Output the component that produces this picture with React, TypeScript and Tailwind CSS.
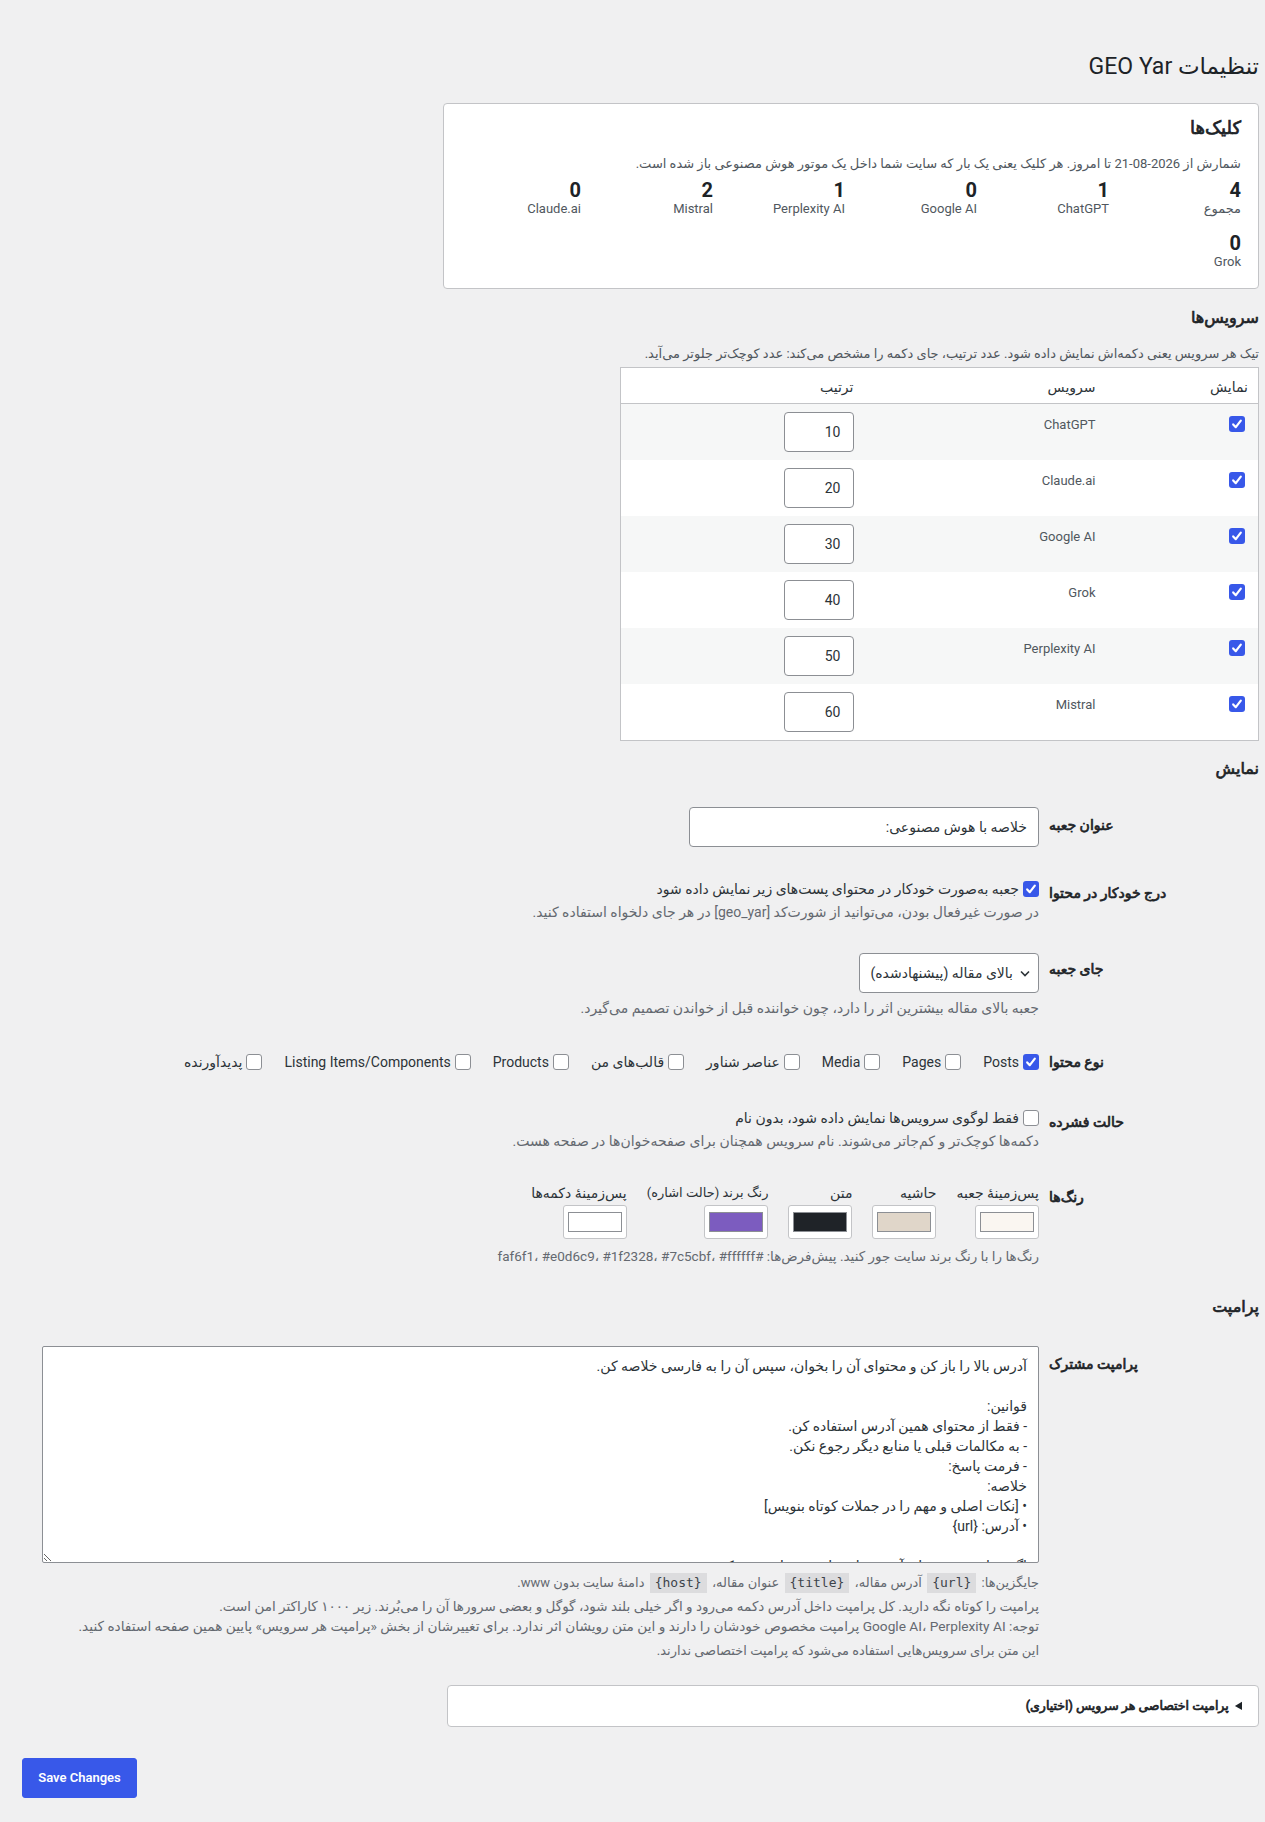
import React from "react";

type Stat = { label: string; value: number };
type Service = { name: string; order: number };

const clickStats: Stat[] = [
  { label: "مجموع", value: 4 },
  { label: "ChatGPT", value: 1 },
  { label: "Google AI", value: 0 },
  { label: "Perplexity AI", value: 1 },
  { label: "Mistral", value: 2 },
  { label: "Claude.ai", value: 0 },
  { label: "Grok", value: 0 },
];

const services: Service[] = [
  { name: "ChatGPT", order: 10 },
  { name: "Claude.ai", order: 20 },
  { name: "Google AI", order: 30 },
  { name: "Grok", order: 40 },
  { name: "Perplexity AI", order: 50 },
  { name: "Mistral", order: 60 },
];

const postTypes = [
  { label: "Posts", checked: true },
  { label: "Pages", checked: false },
  { label: "Media", checked: false },
  { label: "عناصر شناور", checked: false },
  { label: "قالب‌های من", checked: false },
  { label: "Products", checked: false },
  { label: "Listing Items/Components", checked: false },
  { label: "پدیدآورنده", checked: false },
];

// swatch classes are spelled out so the stylesheet picks them up
const colors = [
  { label: "پس‌زمینهٔ جعبه", swatch: "bg-[#faf6f1]", size: "text-[14px]" },
  { label: "حاشیه", swatch: "bg-[#e0d6c9]", size: "text-[14px]" },
  { label: "متن", swatch: "bg-[#1f2328]", size: "text-[14px]" },
  { label: "رنگ برند (حالت اشاره)", swatch: "bg-[#7c5cbf]", size: "text-[13px]" },
  { label: "پس‌زمینهٔ دکمه‌ها", swatch: "bg-[#ffffff]", size: "text-[14px]" },
];

const defaultPrompt = [
  "آدرس بالا را باز کن و محتوای آن را بخوان، سپس آن را به فارسی خلاصه کن.",
  "",
  "قوانین:",
  "- فقط از محتوای همین آدرس استفاده کن.",
  "- به مکالمات قبلی یا منابع دیگر رجوع نکن.",
  "- فرمت پاسخ:",
  "خلاصه:",
  "• [نکات اصلی و مهم را در جملات کوتاه بنویس]",
  "• آدرس: {url}",
  "",
  "اگر نتوانستی محتوای آدرس را بخوانی، فقط بنویس که صفحه در دسترس نیست.",
].join("\n");

// Persian headings use a thickened regular face (the bold face runs too wide)
const heavy = "font-normal [-webkit-text-stroke:0.7px_currentColor]";

const Checkbox = ({ checked = false }: { checked?: boolean }) =>
  checked ? (
    <span className="flex h-4 w-4 shrink-0 items-center justify-center rounded-[3px] bg-[#3858e9]">
      <svg viewBox="0 0 16 16" className="h-4 w-4" fill="none">
        <path
          d="M4.2 8.4 L6.8 11.2 L11.8 4.6"
          stroke="white"
          strokeWidth="2.2"
          strokeLinecap="round"
          strokeLinejoin="round"
        />
      </svg>
    </span>
  ) : (
    <span className="block h-4 w-4 shrink-0 rounded-[3px] border border-[#8c8f94] bg-white" />
  );

const Code = ({ children }: { children: React.ReactNode }) => (
  <code className="mx-[2px] inline-block bg-[#dcdcde] px-[5px] font-['DejaVu_Sans_Mono',monospace] text-[13px] leading-5 text-[#3c434a]">
    {children}
  </code>
);

const FormRow = ({
  label,
  labelClass,
  bodyClass,
  children,
}: {
  label: string;
  labelClass: string;
  bodyClass: string;
  children: React.ReactNode;
}) => (
  <div className="flex">
    <div className={`w-[210px] shrink-0 text-left text-[14px] leading-5 text-[#1d2327] ${heavy} ${labelClass}`}>
      {label}
    </div>
    <div className={`min-w-0 flex-1 px-[10px] ${bodyClass}`}>{children}</div>
  </div>
);

const SectionTitle = ({ title, className }: { title: string; className: string }) => (
  <h2 className={`text-[16px] leading-[22px] text-[#1d2327] ${heavy} ${className}`}>{title}</h2>
);

export default function App() {
  return (
    <div
      dir="rtl"
      className="min-h-[1822px] bg-[#f0f0f1] pb-6 pl-[22px] pr-[6px] font-['Roboto','DejaVu_Sans',sans-serif] text-[13px] leading-5 text-[#3c434a]"
    >
      <h1 className="pt-[52px] text-[23px] font-normal leading-[30px] text-[#1d2327]">تنظیمات GEO Yar</h1>

      {/* click counters */}
      <div className="mt-[21px] w-[816px] rounded-[4px] border border-[#c3c4c7] bg-white px-[17px] pb-[18px] pt-[13px]">
        <h2 className={`text-[18px] leading-[22px] text-[#1d2327] ${heavy}`}>کلیک‌ها</h2>
        <p className="mt-[15px] text-[#50575e]">
          شمارش از 2026-08-21 تا امروز. هر کلیک یعنی یک بار که سایت شما داخل یک موتور هوش مصنوعی باز شده است.
        </p>
        <div className="mt-[5px] grid grid-cols-6 gap-x-3 gap-y-[15px]">
          {clickStats.map((s) => (
            <div key={s.label}>
              <div className="text-[20px] font-bold leading-[22px] text-[#1d2327]">{s.value}</div>
              <div className="text-[13px] leading-4 text-[#50575e]">{s.label}</div>
            </div>
          ))}
        </div>
      </div>

      {/* services table */}
      <SectionTitle title="سرویس‌ها" className="mt-[18px]" />
      <p className="mt-[15px] text-[#50575e]">
        تیک هر سرویس یعنی دکمه‌اش نمایش داده شود. عدد ترتیب، جای دکمه را مشخص می‌کند: عدد کوچک‌تر جلوتر می‌آید.
      </p>
      <table className="mt-[3px] w-[639px] border-collapse border border-[#c3c4c7] bg-white">
        <thead>
          <tr className="border-b border-[#c3c4c7]">
            <th className="w-[152px] pb-[6px] pr-[10px] pt-[9px] text-right text-[14px] font-normal text-[#2c3338]">
              نمایش
            </th>
            <th className="w-[243px] pb-[6px] pr-[11px] pt-[9px] text-right text-[14px] font-normal text-[#2c3338]">
              سرویس
            </th>
            <th className="pb-[6px] pr-[10px] pt-[9px] text-right text-[14px] font-normal text-[#2c3338]">ترتیب</th>
          </tr>
        </thead>
        <tbody>
          {services.map((s, i) => (
            <tr key={s.name} className={i % 2 === 0 ? "bg-[#f6f7f7]" : "bg-white"}>
              <td className="pr-[13px] pt-[12px] align-top">
                <Checkbox checked />
              </td>
              <td className="pr-[11px] pt-[11px] align-top text-[13px] text-[#50575e]">{s.name}</td>
              <td className="py-[8px] pr-[10px] align-top">
                <input
                  type="text"
                  inputMode="numeric"
                  defaultValue={s.order}
                  className="block h-[40px] w-[70px] rounded-[4px] border border-[#8c8f94] bg-white pr-[12px] text-right text-[14px] text-[#2c3338]"
                />
              </td>
            </tr>
          ))}
        </tbody>
      </table>

      {/* display options */}
      <SectionTitle title="نمایش" className="mt-[17px]" />
      <div className="mt-[12px]">
        <FormRow label="عنوان جعبه" labelClass="pt-[23px]" bodyClass="pb-[15px] pt-[15px]">
          <input
            type="text"
            defaultValue="خلاصه با هوش مصنوعی:"
            className="block h-[40px] w-[350px] rounded-[4px] border border-[#8c8f94] bg-white px-[11px] text-[14px] text-[#2c3338]"
          />
        </FormRow>

        <FormRow label="درج خودکار در محتوا" labelClass="pt-[21px]" bodyClass="pb-[16px] pt-[17px]">
          <label className="flex items-center gap-1 text-[14px] text-[#2c3338]">
            <Checkbox checked />
            جعبه به‌صورت خودکار در محتوای پست‌های زیر نمایش داده شود
          </label>
          <p className="mt-[3px] text-[14px] text-[#646970]">
            در صورت غیرفعال بودن، می‌توانید از شورت‌کد [geo_yar] در هر جای دلخواه استفاده کنید.
          </p>
        </FormRow>

        <FormRow label="جای جعبه" labelClass="pt-[21px]" bodyClass="pb-[14px] pt-[15px]">
          <div className="flex h-[40px] w-[180px] items-center gap-1 rounded-[4px] border border-[#8c8f94] bg-white pr-[5px] text-[14px] text-[#2c3338]">
            <svg viewBox="0 0 16 16" className="h-4 w-4 shrink-0" fill="none">
              <path d="M4 6.5 L8 10.5 L12 6.5" stroke="#2c3338" strokeWidth="1.6" />
            </svg>
            <span>بالای مقاله (پیشنهادشده)</span>
          </div>
          <p className="mt-[5px] text-[14px] text-[#646970]">
            جعبه بالای مقاله بیشترین اثر را دارد، چون خواننده قبل از خواندن تصمیم می‌گیرد.
          </p>
        </FormRow>

        <FormRow label="نوع محتوا" labelClass="pt-[20px]" bodyClass="pb-[18px] pt-[20px]">
          <div className="flex flex-wrap items-center gap-x-[22px]">
            {postTypes.map((t) => (
              <label key={t.label} className="flex items-center gap-1 text-[14px] text-[#2c3338]">
                <Checkbox checked={t.checked} />
                {t.label}
              </label>
            ))}
          </div>
        </FormRow>

        <FormRow label="حالت فشرده" labelClass="pt-[22px]" bodyClass="pb-[15px] pt-[18px]">
          <label className="flex items-center gap-1 text-[14px] text-[#2c3338]">
            <Checkbox />
            فقط لوگوی سرویس‌ها نمایش داده شود، بدون نام
          </label>
          <p className="mt-[3px] text-[14px] text-[#646970]">
            دکمه‌ها کوچک‌تر و کم‌جاتر می‌شوند. نام سرویس همچنان برای صفحه‌خوان‌ها در صفحه هست.
          </p>
        </FormRow>

        <FormRow label="رنگ‌ها" labelClass="pt-[21px]" bodyClass="pb-[15px] pt-[17px]">
          <div className="flex items-start gap-5">
            {colors.map((c) => (
              <div key={c.label} className="flex flex-col items-start">
                <span className={`${c.size} text-[#2c3338]`}>{c.label}</span>
                <span className="mt-[2px] flex h-[34px] w-[64px] items-center justify-center rounded-[3px] border border-[#c3c4c7] bg-white">
                  <span className={`block h-[20px] w-[54px] border border-[#8c8f94] ${c.swatch}`} />
                </span>
              </div>
            ))}
          </div>
          <p className="mt-[7px] text-[13.5px] text-[#646970]">
            رنگ‌ها را با رنگ برند سایت جور کنید. پیش‌فرض‌ها: #faf6f1، #e0d6c9، #1f2328، #7c5cbf، #ffffff
          </p>
        </FormRow>
      </div>

      {/* prompt */}
      <SectionTitle title="پرامپت" className="mt-[15px]" />
      <div className="mt-[13px]">
        <FormRow label="پرامپت مشترک" labelClass="pt-[23px]" bodyClass="pb-[15px] pt-[15px]">
          <textarea
            defaultValue={defaultPrompt}
            className="block h-[217px] w-[99%] resize-y overflow-hidden rounded-[2px] border border-[#8c8f94] bg-white px-[11px] py-[9px] text-[14px] leading-5 text-[#2c3338]"
          />
          <p className="mt-[10px] text-[13px] text-[#646970]">
            جایگزین‌ها: <Code>{"{url}"}</Code> آدرس مقاله، <Code>{"{title}"}</Code> عنوان مقاله، <Code>{"{host}"}</Code>{" "}
            دامنهٔ سایت بدون www.
          </p>
          <p className="mt-[3px] text-[13.5px] text-[#646970]">
            پرامپت را کوتاه نگه دارید. کل پرامپت داخل آدرس دکمه می‌رود و اگر خیلی بلند شود، گوگل و بعضی سرورها آن را
            می‌بُرند. زیر ۱۰۰۰ کاراکتر امن است.
          </p>
          <p className="text-[13.7px] text-[#646970]">
            توجه: Google AI، Perplexity AI پرامپت مخصوص خودشان را دارند و این متن رویشان اثر ندارد. برای تغییرشان از بخش
            «پرامپت هر سرویس» پایین همین صفحه استفاده کنید.
          </p>
          <p className="mt-[5px] text-[13px] text-[#646970]">
            این متن برای سرویس‌هایی استفاده می‌شود که پرامپت اختصاصی ندارند.
          </p>
        </FormRow>
      </div>

      <details className="mt-[9px] w-[812px] rounded-[4px] border border-[#c3c4c7] bg-white">
        <summary className={`cursor-pointer px-[16px] py-[10px] text-[12.5px] leading-5 text-[#1d2327] ${heavy}`}>
          پرامپت اختصاصی هر سرویس (اختیاری)
        </summary>
      </details>

      <div className="mt-[31px] flex justify-end">
        <button
          type="button"
          className="h-[40px] w-[115px] rounded-[3px] border border-[#3858e9] bg-[#3858e9] text-[13px] font-semibold text-white"
        >
          Save Changes
        </button>
      </div>
    </div>
  );
}
